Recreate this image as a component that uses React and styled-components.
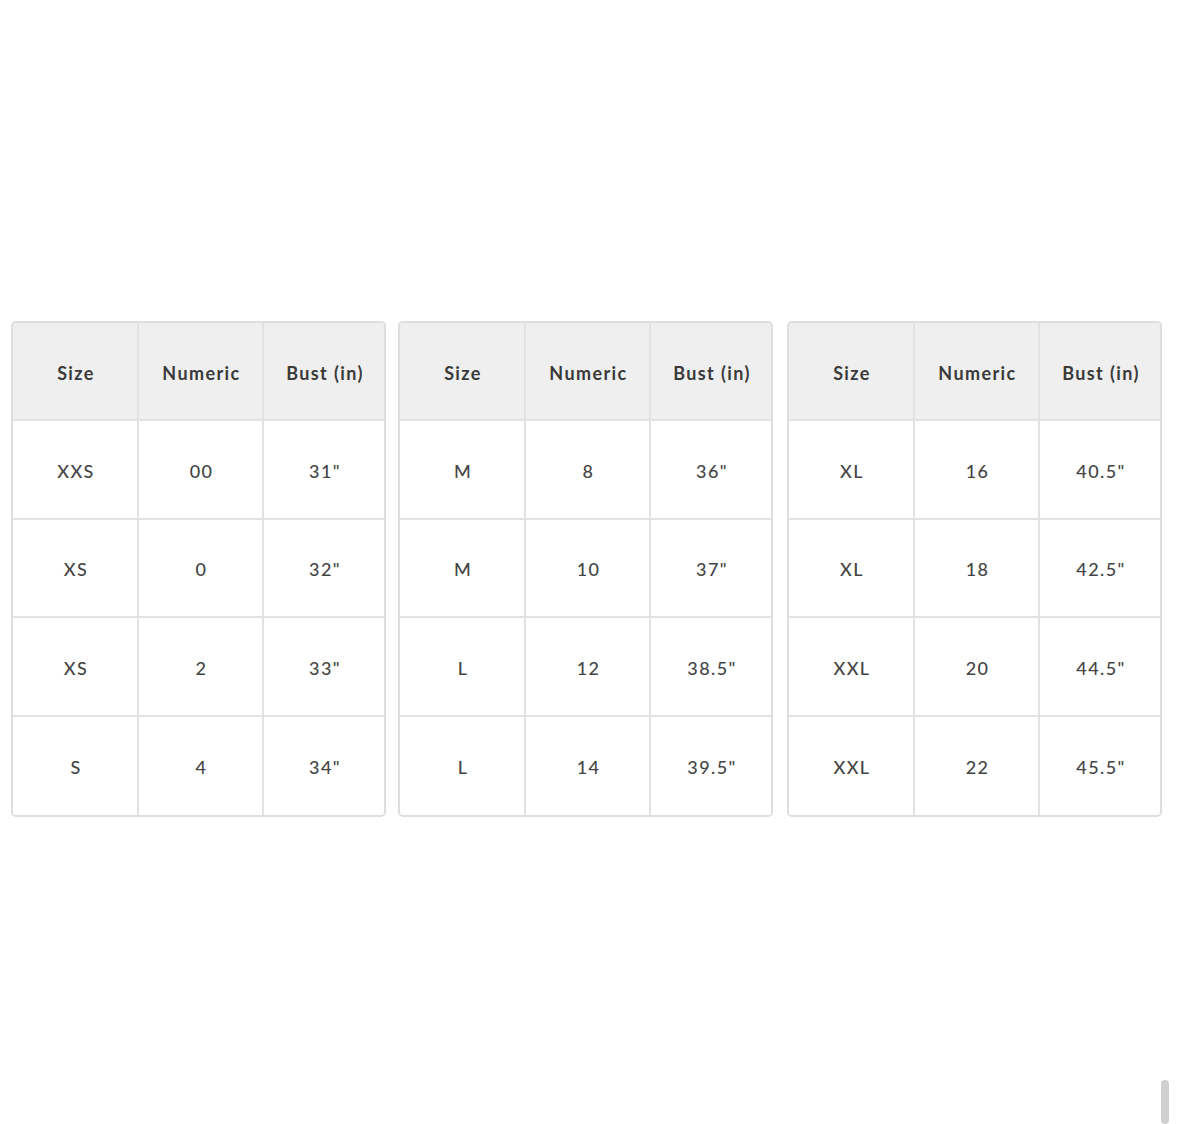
import React from "react";
import styled, { createGlobalStyle } from "styled-components";

const Global = createGlobalStyle`
  html, body { margin: 0; padding: 0; background: #fff; }
  body { font-family: Lato, "Open Sans", "Liberation Sans", sans-serif; }
`;

const Page = styled.div`
  width: 1179px;
  height: 1124px;
  position: relative;
  overflow: hidden;
  box-sizing: border-box;
  padding: 321px 0 0 11px;
`;

const Row = styled.div`
  display: flex;
  gap: 12px;
`;

const Table = styled.div`
  box-sizing: border-box;
  width: 375px;
  height: 496px;
  display: grid;
  grid-template-columns: 126px 125px 1fr;
  grid-template-rows: repeat(5, 1fr);
  border: 2px solid #dedede;
  border-radius: 5px;
  overflow: hidden;
  margin-left: ${(p) => p.$shift || 0}px;
`;

const Cell = styled.div`
  display: flex;
  align-items: center;
  justify-content: center;
  box-sizing: border-box;
  border-right: ${(p) => (p.$last ? "none" : "2px solid #e2e2e2")};
  border-bottom: ${(p) => (p.$bottom ? "none" : "2px solid #e2e2e2")};
  background: ${(p) => (p.$head ? "#efefef" : "#fff")};
  color: ${(p) => (p.$head ? "#3a3a3a" : "#454545")};
  font-size: 18px;
  font-weight: ${(p) => (p.$head ? 700 : 500)};
  letter-spacing: 1.4px;
  padding-top: ${(p) => (p.$head ? 4 : 3)}px;
  padding-left: 2px;
`;

const Scroll = styled.div`
  position: absolute;
  left: 1161px;
  top: 1080px;
  width: 8px;
  height: 44px;
  border-radius: 4px;
  background: #cfcfcf;
`;

const tables = [
  [["XXS", "00", '31"'], ["XS", "0", '32"'], ["XS", "2", '33"'], ["S", "4", '34"']],
  [["M", "8", '36"'], ["M", "10", '37"'], ["L", "12", '38.5"'], ["L", "14", '39.5"']],
  [["XL", "16", '40.5"'], ["XL", "18", '42.5"'], ["XXL", "20", '44.5"'], ["XXL", "22", '45.5"']],
];

const head = ["Size", "Numeric", "Bust (in)"];

function SizeTable({ rows, shift }) {
  return (
    <Table $shift={shift}>
      {head.map((h, i) => (
        <Cell key={h} $head $last={i === 2}>{h}</Cell>
      ))}
      {rows.map((r, ri) =>
        r.map((v, ci) => (
          <Cell key={ri + "-" + ci} $last={ci === 2} $bottom={ri === rows.length - 1}>
            {v}
          </Cell>
        ))
      )}
    </Table>
  );
}

export default function App() {
  return (
    <Page>
      <Global />
      <Row>
        {tables.map((t, i) => (
          <SizeTable key={i} rows={t} shift={i === 2 ? 2 : 0} />
        ))}
      </Row>
      <Scroll />
    </Page>
  );
}
